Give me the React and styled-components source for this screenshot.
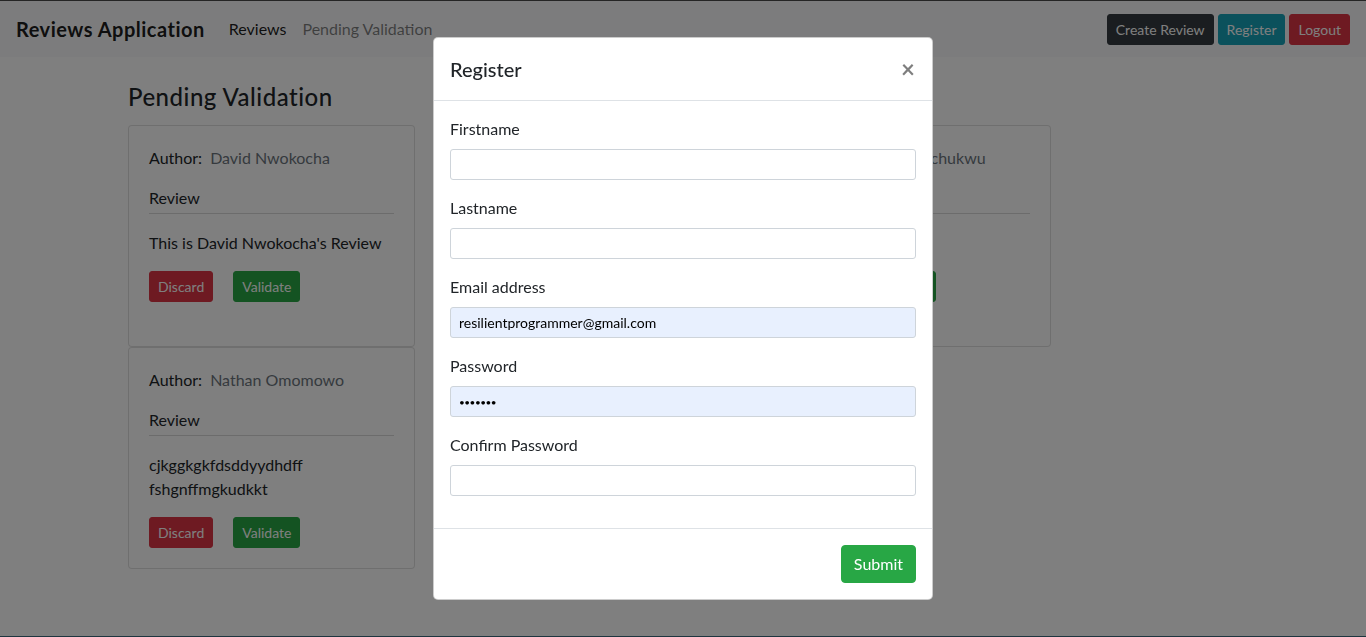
import styled, { createGlobalStyle } from "styled-components";

const GlobalStyle = createGlobalStyle`
  * { box-sizing: border-box; }
  body {
    margin: 0;
    font-family: "Segoe UI", Lato, "Liberation Sans", sans-serif;
    font-size: 16px;
    line-height: 1.5;
    color: #212529;
    background: #fff;
  }
`;

const reviews = [
  {
    author: "David Nwokocha",
    text: "This is David Nwokocha's Review",
  },
  {
    author: "Grace Adebayo",
    text: "The service was really good and the staff were very helpful",
  },
  {
    author: "Emeka Nwochukwu",
    text: "Nice one",
  },
  {
    author: "Nathan Omomowo",
    text: "cjkggkgkfdsddyydhdff fshgnffmgkudkkt",
  },
];

const fields = [
  { label: "Firstname", type: "text", value: "" },
  { label: "Lastname", type: "text", value: "" },
  {
    label: "Email address",
    type: "email",
    value: "resilientprogrammer@gmail.com",
    filled: true,
  },
  { label: "Password", type: "password", value: "1234567", filled: true },
  { label: "Confirm Password", type: "password", value: "" },
];

export default function App() {
  return (
    <Page>
      <GlobalStyle />
      <Navbar>
        <Brand>Reviews Application</Brand>
        <NavLinks>
          <NavLink $active>Reviews</NavLink>
          <NavLink>Pending Validation</NavLink>
        </NavLinks>
        <NavActions>
          <Button $variant="dark" $size="sm">
            Create Review
          </Button>
          <Button $variant="info" $size="sm">
            Register
          </Button>
          <Button $variant="danger" $size="sm">
            Logout
          </Button>
        </NavActions>
      </Navbar>

      <Container>
        <Heading>Pending Validation</Heading>
        <CardGrid>
          {reviews.map((r) => (
            <Card key={r.author}>
              <AuthorLine>
                Author:<Muted>{r.author}</Muted>
              </AuthorLine>
              <ReviewTitle>Review</ReviewTitle>
              <ReviewText>{r.text}</ReviewText>
              <CardActions>
                <Button $variant="danger" $size="sm">
                  Discard
                </Button>
                <Button $variant="success" $size="sm">
                  Validate
                </Button>
              </CardActions>
            </Card>
          ))}
        </CardGrid>
      </Container>

      <Backdrop />
      <ModalWrap>
        <Modal>
          <ModalHeader>
            <ModalTitle>Register</ModalTitle>
            <Close aria-label="Close">×</Close>
          </ModalHeader>
          <ModalBody>
            {fields.map((f) => (
              <FormGroup key={f.label}>
                <Label>{f.label}</Label>
                <Input
                  type={f.type}
                  defaultValue={f.value}
                  $filled={f.filled}
                  readOnly
                />
              </FormGroup>
            ))}
          </ModalBody>
          <ModalFooter>
            <Button $variant="success">Submit</Button>
          </ModalFooter>
        </Modal>
      </ModalWrap>
    </Page>
  );
}

const colors = {
  dark: "#343a40",
  info: "#17a2b8",
  danger: "#dc3545",
  success: "#28a745",
};

const Page = styled.div`
  min-height: 100vh;
  border-top: 1px solid #4a4a4a;
  border-bottom: 1px solid #3a6a7e;
`;

const Navbar = styled.nav`
  display: flex;
  align-items: center;
  height: 56px;
  padding: 0 16px;
  background: #f8f9fa;
`;

const Brand = styled.a`
  font-size: 20px;
  font-weight: 700;
  letter-spacing: 0.5px;
  color: rgba(0, 0, 0, 0.9);
  margin-right: 16px;
  line-height: 30px;
`;

const NavLinks = styled.div`
  display: flex;
  flex: 1;
`;

const NavLink = styled.a`
  padding: 8px;
  color: ${(p) => (p.$active ? "rgba(0, 0, 0, 0.9)" : "rgba(0, 0, 0, 0.5)")};
`;

const NavActions = styled.div`
  display: flex;
  gap: 4px;
`;

const Button = styled.button`
  font-family: inherit;
  border: 1px solid ${(p) => colors[p.$variant]};
  background: ${(p) => colors[p.$variant]};
  color: #fff;
  border-radius: ${(p) => (p.$size === "sm" ? "3px" : "4px")};
  font-size: ${(p) => (p.$size === "sm" ? "14px" : "16px")};
  line-height: 1.5;
  padding: ${(p) => (p.$size === "sm" ? "4px 8px" : "6px 12px")};
  cursor: pointer;
`;

const Container = styled.main`
  width: 1140px;
  margin: 0 auto;
  padding: 26px 15px 0;
`;

const Heading = styled.h4`
  margin: 0 0 13px;
  font-size: 24px;
  font-weight: 500;
  letter-spacing: 0.5px;
  line-height: 1.2;
`;

const CardGrid = styled.div`
  display: grid;
  grid-template-columns: repeat(3, 287px);
  column-gap: 31px;
`;

const Card = styled.div`
  display: flex;
  flex-direction: column;
  padding: 20px;
  border: 1px solid rgba(0, 0, 0, 0.125);
  border-radius: 4px;
  background: #fff;
`;

const AuthorLine = styled.div`
  margin-bottom: 16px;
`;

const Muted = styled.span`
  color: #6c757d;
  margin-left: 8px;
`;

const ReviewTitle = styled.div`
  padding-bottom: 3px;
  border-bottom: 1px solid rgba(0, 0, 0, 0.15);
  margin-bottom: 17px;
`;

const ReviewText = styled.p`
  margin: 0 0 16px;
`;

const CardActions = styled.div`
  display: flex;
  gap: 20px;
`;

const Backdrop = styled.div`
  position: fixed;
  inset: 0;
  background: rgba(0, 0, 0, 0.5);
`;

const ModalWrap = styled.div`
  position: fixed;
  inset: 0;
  display: flex;
  justify-content: center;
  align-items: flex-start;
  padding-top: 37px;
`;

const Modal = styled.div`
  width: 500px;
  background: #fff;
  border: 1px solid rgba(0, 0, 0, 0.2);
  border-radius: 5px;
`;

const ModalHeader = styled.div`
  display: flex;
  align-items: center;
  justify-content: space-between;
  padding: 16px;
  border-bottom: 1px solid #dee2e6;
`;

const ModalTitle = styled.h5`
  margin: 0;
  font-size: 20px;
  font-weight: 500;
  line-height: 30px;
`;

const Close = styled.button`
  background: none;
  border: 0;
  padding: 0 1px 0 0;
  font-family: inherit;
  font-size: 24px;
  font-weight: 700;
  line-height: 1;
  color: #000;
  opacity: 0.5;
`;

const ModalBody = styled.div`
  padding: 16px;
`;

const FormGroup = styled.div`
  margin-bottom: 16px;
`;

const Label = styled.label`
  display: block;
  margin-bottom: 8px;
`;

const Input = styled.input`
  display: block;
  width: 100%;
  height: 31px;
  padding: 4px 8px;
  font-family: inherit;
  font-size: ${(p) => (p.type === "password" ? "10px" : "14px")};
  letter-spacing: ${(p) => (p.type === "password" ? "-0.5px" : "0")};
  color: #000;
  background: ${(p) => (p.$filled ? "#e8f0fe" : "#fff")};
  border: 1px solid #ced4da;
  border-radius: 3px;
  outline: none;
`;

const ModalFooter = styled.div`
  display: flex;
  justify-content: flex-end;
  padding: 12px;
  border-top: 1px solid #dee2e6;
  button {
    margin: 4px;
  }
`;
